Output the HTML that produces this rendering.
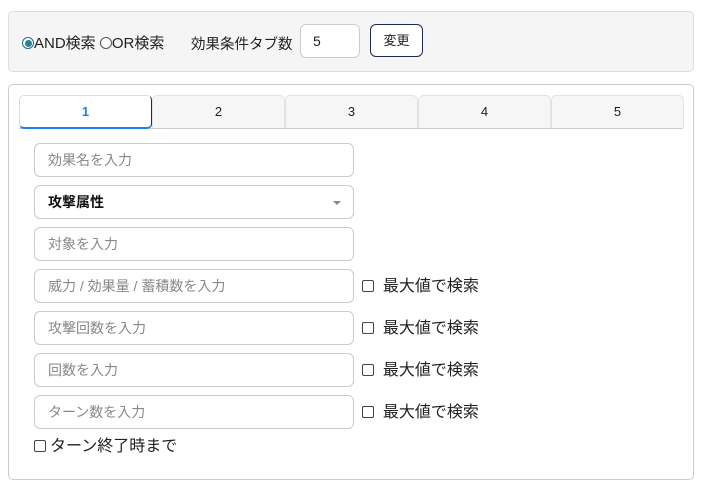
<!DOCTYPE html>
<html><head><meta charset="utf-8"><style>
*{box-sizing:border-box;margin:0;padding:0}
body{width:711px;height:492px;background:#fff;font-family:"Liberation Sans","Noto Sans CJK JP",sans-serif;font-size:14px;color:#222;position:relative;overflow:hidden}
.p1{position:absolute;left:8px;top:11px;width:686px;height:61px;background:#f5f5f5;border:1px solid #ddd;border-radius:5px}
.p2{position:absolute;left:8px;top:84px;width:686px;height:396px;background:#fff;border:1px solid #ccc;border-radius:5px}
.abs{position:absolute;white-space:nowrap}
.radio{display:inline-block;width:12px;height:12px;border:1px solid #555;border-radius:50%;vertical-align:-1px;position:relative;background:#fff}
.radio.on{border-color:#1a6f8a}
.radio.on::after{content:"";position:absolute;left:1.5px;top:1.5px;width:7px;height:7px;border-radius:50%;background:#2a7f91}
.num{position:absolute;left:300px;top:24px;width:60px;height:34px;border:1px solid #ccc;border-radius:6px;background:#fff;padding:8px 12px;font-size:14px}
.btn{position:absolute;left:370px;top:24px;width:53px;height:33px;border:1px solid #1e2a50;border-radius:6px;background:#fff;font-size:13px;text-align:center;line-height:31px}
.tabs{position:absolute;left:19px;top:95px;width:664px;height:34px;border-bottom:1px solid #ccc}
.tab{position:absolute;top:0;height:33px;width:133px;background:#f6f6f6;border:1px solid #e2e2e2;border-bottom:none;border-radius:5px 5px 0 0;text-align:center;line-height:32px;font-size:13px;color:#222}
.tab.act{background:#fff;border:1px solid #1e2a50;border-left:1px solid #ddd;border-top:1px solid #ddd;border-bottom:2px solid #1a7ff0;color:#1a7ff0;font-weight:bold;height:34px;border-radius:5px 5px 5px 5px}
.in{position:absolute;left:34px;width:320px;height:34px;border:1px solid #ccc;border-radius:6px;background:#fff;padding:0 13px;line-height:32px;font-size:14px;color:#888}
.cb{display:inline-block;width:12px;height:12px;border:1px solid #444;border-radius:2px;background:#fff;vertical-align:-1px}
.mx{position:absolute;left:362px;font-size:16px;color:#222}
</style></head><body>
<div class="p1"></div>
<div class="abs" style="left:22px;top:32px;font-size:15px"><span class="radio on"></span>AND検索 <span class="radio"></span>OR検索</div>
<div class="abs" style="left:191px;top:33px;font-size:14.5px">効果条件タブ数</div>
<div class="num">5</div>
<div class="btn">変更</div>
<div class="p2"></div>
<div class="tabs">
<div class="tab act" style="left:0">1</div>
<div class="tab" style="left:133px">2</div>
<div class="tab" style="left:266px">3</div>
<div class="tab" style="left:399px">4</div>
<div class="tab" style="left:532px">5</div>
</div>
<div class="in" style="top:143px">効果名を入力</div>
<div class="in" style="top:185px;color:#111;font-weight:bold">攻撃属性<span style="position:absolute;right:12px;top:15px;border-left:4px solid transparent;border-right:4px solid transparent;border-top:4px solid #888"></span></div>
<div class="in" style="top:227px">対象を入力</div>
<div class="in" style="top:269px">威力 / 効果量 / 蓄積数を入力</div>
<div class="in" style="top:311px">攻撃回数を入力</div>
<div class="in" style="top:353px">回数を入力</div>
<div class="in" style="top:395px">ターン数を入力</div>
<div class="mx" style="top:272px"><span class="cb"></span>&nbsp; 最大値で検索</div>
<div class="mx" style="top:314px"><span class="cb"></span>&nbsp; 最大値で検索</div>
<div class="mx" style="top:356px"><span class="cb"></span>&nbsp; 最大値で検索</div>
<div class="mx" style="top:398px"><span class="cb"></span>&nbsp; 最大値で検索</div>
<div class="abs" style="left:34px;top:432px;font-size:16px"><span class="cb" style="margin-right:4px"></span>ターン終了時まで</div>
</body></html>
